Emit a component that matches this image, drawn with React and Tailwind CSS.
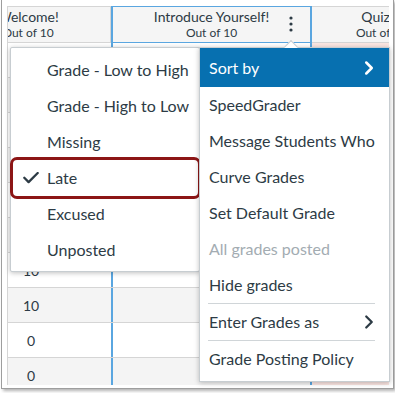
import React from 'react';
import { ChevronRight } from 'lucide-react';

const scores = ['', '', '', '', '', '', '10', '10', '0', '0'];

const sortOptions = [
  { label: 'Grade - Low to High' },
  { label: 'Grade - High to Low' },
  { label: 'Missing' },
  { label: 'Late', checked: true },
  { label: 'Excused' },
  { label: 'Unposted' },
];

function Kebab() {
  return (
    <svg width="4" height="16" viewBox="0 0 4 16" className="absolute left-[176px] top-[9px]">
      <circle cx="2" cy="2" r="1.6" fill="#2d3b45" />
      <circle cx="2" cy="8" r="1.6" fill="#2d3b45" />
      <circle cx="2" cy="14" r="1.6" fill="#2d3b45" />
    </svg>
  );
}

function CheckMark() {
  return (
    <svg width="16" height="12" viewBox="0 0 16 12" fill="none">
      <path d="M1.3 5.8 L5.6 10.1 L14.7 1" stroke="#2d3b45" strokeWidth="2.3" strokeLinecap="round" strokeLinejoin="round" />
    </svg>
  );
}

function HeaderCell({ title, width, children, selected }) {
  return (
    <div
      className={`relative shrink-0 h-[37px] bg-[#f5f5f5] flex flex-col items-center justify-center border-y ${
        selected ? 'border-x-2 border-[#5aa6e0]' : 'border-[#d5d5d5]'
      } ${width}`}
    >
      <span className="text-[14px] leading-[17px] whitespace-nowrap">{title}</span>
      <span className="text-[12px] leading-[16px] whitespace-nowrap">Out of 10</span>
      {children}
    </div>
  );
}

export default function App() {
  return (
    <div className="relative w-[395px] h-[393px] bg-white overflow-hidden font-['Lato',sans-serif] text-[#2d3b45]">
      {/* framed gradebook */}
      <div className="ml-px w-[393px] h-[389px] border-x border-b border-[#9e9e9e] shadow-[2px_2px_3px_rgba(0,0,0,0.3)] pl-[5px] pt-[6px] pr-[4px] pb-[3px]">
        <div className="h-full overflow-hidden border-l border-[#d5d5d5]">
          <div className="flex ml-[-57px]">
            <HeaderCell title="Welcome!" width="w-[160px] border-r pr-[5px]" />
            <HeaderCell title="Introduce Yourself!" width="w-[201px]" selected>
              <Kebab />
            </HeaderCell>
            <HeaderCell title="Quiz 1" width="w-[145px] border-l-0 pr-[6px]" />
          </div>
          {scores.map((s, i) => (
            <div key={i} className={`flex ml-[-57px] h-[35px] border-b border-[#d5d5d5] ${i % 2 ? 'bg-[#f4f4f4]' : 'bg-white'}`}>
              <div className="w-[160px] shrink-0 flex items-center justify-center text-[14px]">{s}</div>
              <div className="w-[201px] shrink-0 border-x-2 border-[#5aa6e0]" />
              <div className="w-[145px] shrink-0 bg-[#fbe6e2]" />
            </div>
          ))}
        </div>
      </div>

      {/* sort by submenu */}
      <div className="absolute left-[10px] top-[47px] w-[190px] h-[225px] bg-white border border-[#c7cdd1] rounded-[2px] shadow-[0_1px_5px_rgba(0,0,0,0.25)] pt-[4px]">
        {sortOptions.map((o) => (
          <div key={o.label} className="h-9 flex items-center pl-[8px] text-[16px] whitespace-nowrap">
            <span className="w-[28px] shrink-0 flex items-center pl-[4px]">
              {o.checked && <CheckMark />}
            </span>
            {o.label}
          </div>
        ))}
      </div>

      {/* highlight around Late */}
      <div className="absolute left-[10px] top-[157px] w-[191px] h-[42px] border-[3px] border-[#8c1515] rounded-[7px]" />

      {/* column menu */}
      <div className="absolute left-[199px] top-[47px] w-[191px] h-[335px] bg-white border border-[#c7cdd1] shadow-[0_1px_5px_rgba(0,0,0,0.25)] text-[16px] whitespace-nowrap">
        <div className="absolute left-[86px] top-[-6px] w-[10px] h-[10px] bg-white border-l border-t border-[#c7cdd1] rotate-45" />
        <div className="relative h-[39px] bg-[#0770b0] text-white flex items-center justify-between pl-[9px] pr-[9px]">
          Sort by
          <ChevronRight size={22} strokeWidth={2.75} />
        </div>
        <div className="h-9 flex items-center pl-[9px]">SpeedGrader</div>
        <div className="h-9 flex items-center pl-[9px]">Message Students Who</div>
        <div className="h-9 flex items-center pl-[9px]">Curve Grades</div>
        <div className="h-9 flex items-center pl-[9px]">Set Default Grade</div>
        <div className="h-9 flex items-center pl-[9px] text-[#a3acb2]">All grades posted</div>
        <div className="h-9 flex items-center pl-[9px]">Hide grades</div>
        <div className="h-px bg-[#d0d5d8] ml-[8px] mr-[14px]" />
        <div className="h-9 flex items-center justify-between pl-[9px] pr-[9px]">
          Enter Grades as
          <ChevronRight size={22} strokeWidth={2.5} />
        </div>
        <div className="h-px bg-[#d0d5d8] ml-[8px] mr-[14px]" />
        <div className="h-9 flex items-center pl-[9px]">Grade Posting Policy</div>
      </div>
    </div>
  );
}
